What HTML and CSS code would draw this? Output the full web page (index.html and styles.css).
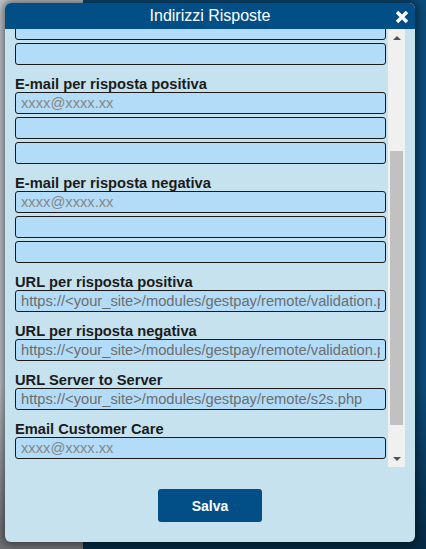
FILE: index.html
```html
<!DOCTYPE html>
<html lang="it">
<head>
<meta charset="utf-8">
<title>Indirizzi Risposte</title>
<link rel="stylesheet" href="styles.css">
</head>
<body>
<div class="backdrop">
  <div class="modal">
    <div class="modal-header">
      <span class="modal-title">Indirizzi Risposte</span>
      <button class="close" aria-label="Chiudi">
        <svg width="14" height="14" viewBox="0 0 14 14"><path d="M2 2 L12 12 M12 2 L2 12" stroke="#fff" stroke-width="3.4" stroke-linecap="butt"/></svg>
      </button>
    </div>
    <div class="modal-body">
      <div class="scroll" id="scroll">
        <div class="field">
          <label class="field-label">E-mail Esercente</label>
          <input class="inp" type="text" placeholder="xxxx@xxxx.xx">
          <input class="inp" type="text">
          <input class="inp" type="text">
        </div>
        <div class="field">
          <label class="field-label">E-mail per risposta positiva</label>
          <input class="inp" type="text" placeholder="xxxx@xxxx.xx">
          <input class="inp" type="text">
          <input class="inp" type="text">
        </div>
        <div class="field">
          <label class="field-label">E-mail per risposta negativa</label>
          <input class="inp" type="text" placeholder="xxxx@xxxx.xx">
          <input class="inp" type="text">
          <input class="inp" type="text">
        </div>
        <div class="field">
          <label class="field-label">URL per risposta positiva</label>
          <input class="inp url" type="text" readonly value="https://&lt;your_site&gt;/modules/gestpay/remote/validation.php">
        </div>
        <div class="field">
          <label class="field-label">URL per risposta negativa</label>
          <input class="inp url" type="text" readonly value="https://&lt;your_site&gt;/modules/gestpay/remote/validation.php">
        </div>
        <div class="field">
          <label class="field-label">URL Server to Server</label>
          <input class="inp url" type="text" readonly value="https://&lt;your_site&gt;/modules/gestpay/remote/s2s.php">
        </div>
        <div class="field">
          <label class="field-label">Email Customer Care</label>
          <input class="inp" type="text" placeholder="xxxx@xxxx.xx">
        </div>
        <div class="field">
          <label class="field-label">Telefono Customer Care</label>
          <input class="inp" type="text">
        </div>
      </div>
      <div class="scrollbar">
        <div class="sb-btn"><span class="tri-up"></span></div>
        <div class="sb-gap-top"></div>
        <div class="sb-thumb"></div>
        <div class="sb-gap-bottom"></div>
        <div class="sb-btn"><span class="tri-down"></span></div>
      </div>
    </div>
    <div class="modal-footer">
      <button class="save">Salva</button>
    </div>
  </div>
</div>
<script src="script.js"></script>
</body>
</html>
```
FILE: styles.css
```css
html, body {
  margin: 0;
  padding: 0;
  width: 426px;
  height: 549px;
  overflow: hidden;
}
body {
  font-family: "Liberation Sans", Arial, sans-serif;
  background:
    linear-gradient(to bottom, rgba(0,0,0,0) 0, rgba(0,0,0,0) 70%, rgba(0,0,0,0.45) 100%),
    linear-gradient(to right, #c4cacf 0, #c4cacf 83px, #0b4c7a 83px, #0b4c7a 100%);
}
.backdrop {
  padding: 3px 0 0 5px;
}
.modal {
  width: 410px;
  height: 539px;
  background: #c5e2ee;
  border-radius: 6px;
  box-shadow: 0 0 10px 2px rgba(0,0,0,0.55);
  display: flex;
  flex-direction: column;
  overflow: hidden;
}
.modal-header {
  height: 26px;
  background: #024f88;
  display: flex;
  align-items: center;
  justify-content: center;
  position: relative;
  flex: none;
}
.modal-title {
  color: #fff;
  font-size: 16px;
  line-height: 26px;
}
.close {
  position: absolute;
  right: 6px;
  top: 7px;
  width: 14px;
  height: 14px;
  padding: 0;
  border: 0;
  background: none;
  display: block;
}
.close svg { display: block; }
.modal-body {
  display: flex;
  height: 438px;
  flex: none;
  padding-right: 10px;
}
.scroll {
  flex: 1;
  overflow: hidden;
  padding: 0 2px 0 10px;
}
.field {
  display: flex;
  flex-direction: column;
}
.field-label {
  display: block;
  margin-top: 8px;
  font-weight: bold;
  font-size: 14.7px;
  line-height: 16px;
  color: #1b1b1b;
}
.inp {
  display: block;
  box-sizing: border-box;
  width: 371px;
  height: 22px;
  margin: 0 0 3px 0;
  padding: 0 5px;
  border: 1px solid #1a1a1a;
  border-radius: 3px;
  background: #b2dcf7;
  font-family: "Liberation Sans", Arial, sans-serif;
  font-size: 14.7px;
  color: #333;
  outline: none;
}
.inp::placeholder { color: #878787; }
.inp.url { color: #6e6e6e; }
.scrollbar {
  width: 17px;
  flex: none;
  background: #f0f0f0;
  display: flex;
  flex-direction: column;
}
.sb-btn {
  height: 17px;
  display: flex;
  align-items: center;
  justify-content: center;
  flex: none;
}
.tri-up {
  width: 0; height: 0;
  border-left: 4px solid transparent;
  border-right: 4px solid transparent;
  border-bottom: 4px solid #505050;
}
.tri-down {
  width: 0; height: 0;
  border-left: 4px solid transparent;
  border-right: 4px solid transparent;
  border-top: 4px solid #505050;
}
.sb-gap-top { height: 105px; flex: none; }
.sb-thumb {
  height: 274px;
  margin: 0 2px;
  background: #c1c1c1;
  flex: none;
}
.sb-gap-bottom { flex: 1; }
.modal-footer {
  flex: 1;
  display: flex;
  justify-content: center;
  align-items: flex-start;
  padding-top: 22px;
}
.save {
  width: 104px;
  height: 33px;
  background: #024f88;
  color: #fff;
  border: 0;
  border-radius: 3px;
  font-family: "Liberation Sans", Arial, sans-serif;
  font-weight: bold;
  font-size: 14px;
  padding: 0;
}
```
FILE: script.js
```js
document.getElementById('scroll').scrollTop = 60;
```
